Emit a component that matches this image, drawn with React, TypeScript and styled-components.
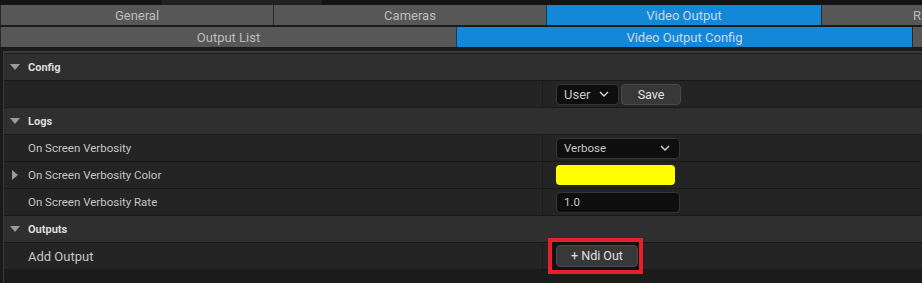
import styled, { createGlobalStyle } from 'styled-components'

const Global = createGlobalStyle`
    body {
        margin: 0;
        background: #151515;
        font-family: Roboto, "Noto Sans", "Liberation Sans", sans-serif;
        overflow: hidden;
    }
`

const Page = styled.div`
    width: 922px;
    height: 283px;
    overflow: hidden;
    background: #1a1a1a;
`

const TopStrip = styled.div`
    height: 5px;
    background: #141414;
    display: flex;

    span {
        margin-left: 162px;
        width: 160px;
        background: #212121;
    }
`

const TabRow = styled.div<{ $cols: string }>`
    display: grid;
    grid-template-columns: ${p => p.$cols};
    height: 20px;
    margin-bottom: 2px;
    background: #141414;
    overflow: hidden;
`

const Tab = styled.div<{ $active?: boolean }>`
    display: flex;
    align-items: center;
    justify-content: center;
    background: ${p => (p.$active ? '#1488d8' : '#575757')};
    color: ${p => (p.$active ? '#cfd6dd' : '#bdbdbd')};
    border-left: 1px solid ${p => (p.$active ? '#123a5a' : '#2a2a2a')};
    font-size: 13px;
    white-space: nowrap;
    overflow: hidden;
`

const Panel = styled.div`
    margin: 4px 0 0 3px;
    border-top: 2px solid #3a3a3a;
    border-left: 1px solid #3a3a3a;
    padding-top: 1px;
    background: #1c1c1c;
    height: 240px;
`

const Row = styled.div<{ $header?: boolean }>`
    display: grid;
    grid-template-columns: 538px 1fr;
    grid-template-rows: 26px;
    height: 26px;
    border-bottom: 1px solid #191919;
    background: ${p => (p.$header ? '#2f2f2f' : '#242424')};
`

const NameCell = styled.div<{ $header?: boolean; $size?: number }>`
    display: flex;
    align-items: center;
    padding-left: 6px;
    gap: 8px;
    font-size: ${p => (p.$header ? '11px' : `${p.$size ?? 11.5}px`)};
    font-weight: ${p => (p.$header ? 700 : 400)};
    color: ${p => (p.$header ? '#dcdcdc' : '#c4c4c4')};
`

const Arrow = styled.span<{ $open?: boolean; $hidden?: boolean }>`
    width: 10px;
    display: flex;
    justify-content: center;
    visibility: ${p => (p.$hidden ? 'hidden' : 'visible')};

    &::before {
        content: '';
        border-style: solid;
        border-color: transparent;
        ${p =>
            p.$open
                ? 'border-width: 6px 5px 0 5px; border-top-color: #9a9a9a;'
                : 'border-width: 5px 0 5px 6px; border-left-color: #9a9a9a;'}
    }
`

const ValueCell = styled.div<{ $divider?: boolean }>`
    display: flex;
    align-items: center;
    gap: 2px;
    padding-left: 13px;
    border-left: 1px solid ${p => (p.$divider ? '#1b1b1b' : 'transparent')};
`

const Field = styled.div<{ $w: number; $size?: number }>`
    width: ${p => p.$w}px;
    height: 21px;
    box-sizing: border-box;
    display: flex;
    align-items: center;
    justify-content: space-between;
    padding: 0 9px 0 7px;
    background: #0e0e0e;
    border: 1px solid #363636;
    border-radius: 4px;
    color: #c8c8c8;
    font-size: ${p => p.$size ?? 11.5}px;
`

const Button = styled.div<{ $w: number; $h?: number }>`
    width: ${p => p.$w}px;
    height: ${p => p.$h ?? 21}px;
    box-sizing: border-box;
    display: flex;
    align-items: center;
    justify-content: center;
    background: #383838;
    border: 1px solid #4a4a4a;
    border-radius: 4px;
    color: #e0e0e0;
    font-size: 12.5px;
`

const Swatch = styled.div`
    width: 119px;
    height: 20px;
    background: #ffff00;
    border-radius: 4px;
`

const Highlight = styled.div`
    flex-shrink: 0;
    border: 4px solid #e8202a;
    padding: 3px 1px 3px 4px;
    margin-left: -8px;
    background: #111;
    line-height: 0;
`

const Chevron = () => (
    <svg width="10" height="6" viewBox="0 0 10 6">
        <path d="M1 1 L5 5 L9 1" fill="none" stroke="#d8d8d8" strokeWidth="1.4" />
    </svg>
)

export default function App() {
    return (
        <Page>
            <Global />
            <TopStrip><span /></TopStrip>
            <TabRow $cols="273px 273px 275px 1fr">
                <Tab>General</Tab>
                <Tab>Cameras</Tab>
                <Tab $active>Video Output</Tab>
                <Tab style={{ justifyContent: 'flex-start', paddingLeft: 91 }}>R</Tab>
            </TabRow>
            <TabRow $cols="456px 456px 1fr">
                <Tab>Output List</Tab>
                <Tab $active>Video Output Config</Tab>
                <Tab />
            </TabRow>
            <Panel>
                <Row $header>
                    <NameCell $header><Arrow $open />Config</NameCell>
                    <ValueCell />
                </Row>
                <Row>
                    <NameCell />
                    <ValueCell $divider>
                        <Field $w={63} $size={13}>User <Chevron /></Field>
                        <Button $w={60}>Save</Button>
                    </ValueCell>
                </Row>
                <Row $header>
                    <NameCell $header><Arrow $open />Logs</NameCell>
                    <ValueCell />
                </Row>
                <Row>
                    <NameCell><Arrow $hidden />On Screen Verbosity</NameCell>
                    <ValueCell $divider>
                        <Field $w={124}>Verbose <Chevron /></Field>
                    </ValueCell>
                </Row>
                <Row>
                    <NameCell><Arrow />On Screen Verbosity Color</NameCell>
                    <ValueCell $divider><Swatch /></ValueCell>
                </Row>
                <Row>
                    <NameCell><Arrow $hidden />On Screen Verbosity Rate</NameCell>
                    <ValueCell $divider><Field $w={124}>1.0</Field></ValueCell>
                </Row>
                <Row $header>
                    <NameCell $header><Arrow $open />Outputs</NameCell>
                    <ValueCell />
                </Row>
                <Row>
                    <NameCell $size={13}><Arrow $hidden />Add Output</NameCell>
                    <ValueCell $divider>
                        <Highlight><Button $w={82} $h={22}>+ Ndi Out</Button></Highlight>
                    </ValueCell>
                </Row>
            </Panel>
        </Page>
    )
}
